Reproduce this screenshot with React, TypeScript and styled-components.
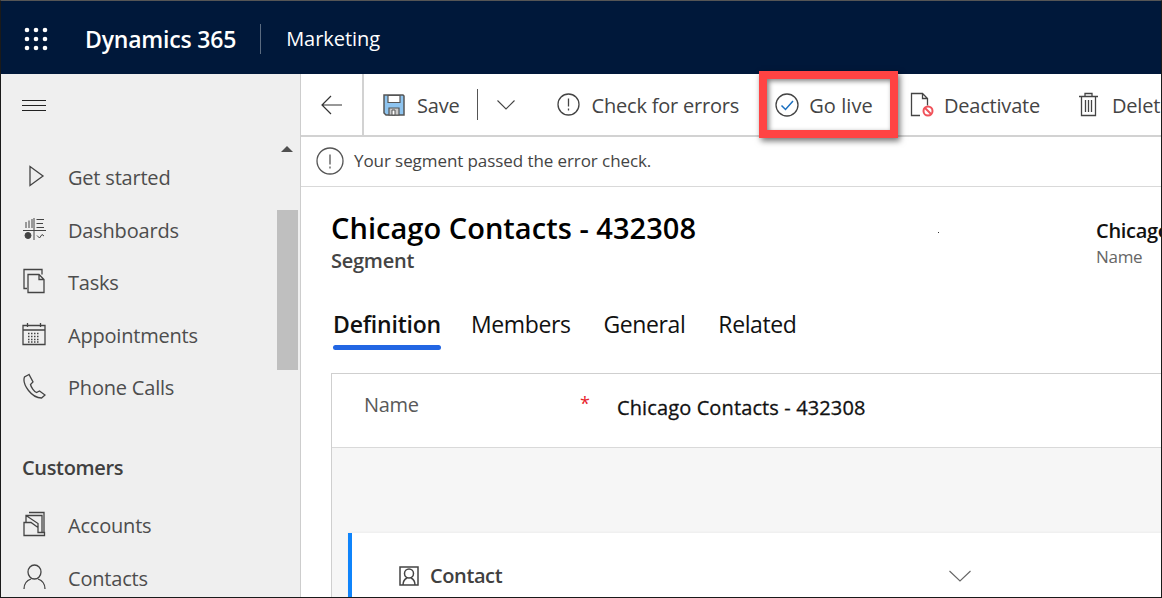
import styled, { createGlobalStyle } from 'styled-components';

const GlobalStyle = createGlobalStyle`
  html, body { margin: 0; padding: 0; background: #fff; }
  * { box-sizing: border-box; }
`;

const Frame = styled.div`
  width: 1162px;
  height: 598px;
  overflow: hidden;
  display: flex;
  flex-direction: column;
  border: 1px solid #1a1a1a;
  border-top-color: #555;
  font-family: 'Open Sans', 'Noto Sans', sans-serif;
  color: #333;
`;

const TopBar = styled.header`
  flex: 0 0 73px;
  display: flex;
  align-items: center;
  background: #00183a;
  color: #fff;
  padding: 2px 0 0 23px;
`;

const Waffle = styled.svg`
  width: 24px;
  height: 24px;
  margin-right: 37px;
`;

const Brand = styled.div`
  font-size: 23px;
  font-weight: 600;
  letter-spacing: -0.2px;
  padding-right: 24px;
  line-height: 30px;
`;

const Area = styled.div`
  font-size: 20px;
  letter-spacing: -0.05px;
  padding-left: 25px;
  border-left: 1px solid #5b6b80;
  line-height: 30px;
`;

const Body = styled.div`
  flex: 1;
  display: flex;
  min-height: 0;
`;

const Sidebar = styled.nav`
  position: relative;
  flex: 0 0 300px;
  background: #efefef;
  border-right: 1px solid #cdcdcd;
  overflow: hidden;
`;

const Hamburger = styled.div`
  height: 63px;
  display: flex;
  align-items: center;
  padding-left: 21px;
`;

const NavList = styled.ul<{ $top: number }>`
  list-style: none;
  margin: 0;
  padding: ${(p) => p.$top}px 0 0;
`;

const NavRow = styled.li`
  height: 52.5px;
  display: flex;
  align-items: center;
  font-size: 20px;
  letter-spacing: -0.2px;
  color: #4d4d4d;
`;

const NavIcon = styled.span`
  flex: 0 0 67px;
  display: flex;
  padding-left: 21px;
  margin-bottom: 3px;
`;

const NavGroup = styled.div`
  height: 55px;
  margin-top: 25.5px;
  display: flex;
  align-items: center;
  padding: 0 0 0 21px;
  font-size: 20px;
  font-weight: 600;
  letter-spacing: -0.35px;
  color: #404040;
`;

const ScrollArrow = styled.div`
  position: absolute;
  left: 280px;
  top: 72px;
  width: 0;
  height: 0;
  border-left: 6px solid transparent;
  border-right: 6px solid transparent;
  border-bottom: 6px solid #505050;
`;

const ScrollThumb = styled.div`
  position: absolute;
  left: 276px;
  top: 136px;
  width: 21px;
  height: 160px;
  background: #bfbfbf;
`;

const Main = styled.main`
  flex: 1;
  min-width: 0;
  display: flex;
  flex-direction: column;
  background: #fff;
`;

const CommandBar = styled.div`
  flex: 0 0 63px;
  display: flex;
  align-items: center;
  border-bottom: 2px solid #d2d2d2;
  white-space: nowrap;
  font-size: 20px;
  letter-spacing: -0.2px;
  color: #444;
`;

const BackButton = styled.div`
  flex: 0 0 63px;
  align-self: stretch;
  display: flex;
  align-items: center;
  justify-content: center;
  border-right: 2px solid #d2d2d2;
`;

const Command = styled.div<{ $left: number; $gap?: number }>`
  flex: none;
  position: relative;
  display: flex;
  align-items: center;
  gap: ${(p) => p.$gap ?? 12}px;
  margin-left: ${(p) => p.$left}px;
`;

const CommandLabel = styled.span<{ $tracking?: number }>`
  margin-top: 2px;
  letter-spacing: ${(p) => p.$tracking ?? -0.2}px;
`;

const Highlight = styled.div`
  position: absolute;
  left: -16px;
  right: -25px;
  top: -19px;
  bottom: -19px;
  border: 8px solid #ff4343;
  box-shadow: 2px 3px 6px rgba(0, 0, 0, 0.55), inset 2px 2px 5px rgba(0, 0, 0, 0.5);
  pointer-events: none;
`;

const SplitLine = styled.div`
  flex: none;
  width: 1px;
  height: 31px;
  background: #555;
  margin-left: 17px;
`;

const Notice = styled.div`
  flex: 0 0 50px;
  display: flex;
  align-items: center;
  gap: 10px;
  padding: 0 0 2px 15px;
  border-bottom: 1px solid #d9d9d9;
  font-size: 17px;
  letter-spacing: -0.08px;
  color: #444;
`;

const Content = styled.div`
  flex: 1;
  min-height: 0;
  padding: 0 0 0 30px;
  overflow: hidden;
`;

const RecordHead = styled.div`
  position: relative;
  display: flex;
  justify-content: space-between;
  height: 95px;
  padding-top: 22px;
`;

const RecordTitle = styled.h1`
  margin: 0;
  font-size: 29px;
  line-height: 38px;
  font-weight: 600;
  letter-spacing: 0.04px;
  color: #000;
`;

const RecordType = styled.div`
  font-size: 20px;
  line-height: 28px;
  font-weight: 600;
  letter-spacing: -0.25px;
  color: #444;
`;

const HeadField = styled.div`
  flex: 0 0 65px;
  overflow: hidden;
  padding-top: 8px;
`;

const HeadValue = styled.div`
  font-size: 20px;
  line-height: 28px;
  font-weight: 600;
  letter-spacing: -0.3px;
  color: #111;
`;

const HeadLabel = styled.div`
  font-size: 17px;
  line-height: 24px;
  letter-spacing: -0.3px;
  color: #666;
`;

const Speck = styled.span`
  position: absolute;
  left: 607px;
  top: 45px;
  width: 1px;
  height: 1px;
  background: #333;
`;

const Tabs = styled.div`
  display: flex;
  height: 91px;
  padding: 26px 0 0 2px;
  gap: 33px;
`;

const Tab = styled.div<{ $active?: boolean }>`
  position: relative;
  height: 33px;
  font-size: 23px;
  line-height: 33px;
  font-weight: ${(p) => (p.$active ? 600 : 400)};
  letter-spacing: ${(p) => (p.$active ? -0.2 : -0.4)}px;
  color: #111;
  margin-right: ${(p) => (p.$active ? -3 : 0)}px;

  &::after {
    content: '';
    display: ${(p) => (p.$active ? 'block' : 'none')};
    width: ${(p) => (p.$active ? '108px' : 0)};
    height: 5px;
    margin-top: 4px;
    border-radius: 3px;
    background: #2266e3;
  }
`;

const FormPanel = styled.section`
  border-top: 1px solid #cfcfcf;
  border-left: 1px solid #cfcfcf;
  height: 240px;
  display: flex;
  flex-direction: column;
`;

const NameRow = styled.div`
  flex: 0 0 74px;
  display: flex;
  border-bottom: 1px solid #d9d9d9;
`;

const FieldLabel = styled.div`
  flex: 0 0 248px;
  padding: 17px 0 0 32px;
  font-size: 20px;
  line-height: 28px;
  letter-spacing: -0.3px;
  color: #595959;
`;

const Required = styled.div`
  flex: 0 0 37px;
  padding-top: 15px;
  font-size: 18px;
  line-height: 28px;
  color: #e8232b;
`;

const FieldValue = styled.div`
  padding-top: 20px;
  font-size: 20px;
  line-height: 28px;
  letter-spacing: 0.12px;
  -webkit-text-stroke: 0.3px #111;
  color: #111;
`;

const GrayArea = styled.div`
  flex: 1;
  background: #f6f6f6;
  padding: 85px 0 0 16px;
`;

const Card = styled.div`
  height: 80px;
  background: #fff;
  border-left: 4px solid #0f84fb;
  box-shadow: 0 -1px 2px rgba(0, 0, 0, 0.04);
  display: flex;
  align-items: flex-start;
  padding: 29px 0 0 47px;
`;

const CardTitle = styled.div`
  display: flex;
  align-items: center;
  gap: 11px;
  width: 550px;
  font-size: 20px;
  line-height: 28px;
  font-weight: 600;
  letter-spacing: -0.4px;
  color: #404040;
`;

const CardChevron = styled.svg`
  width: 22px;
  height: 12px;
  margin-top: 8px;
`;

const line = { fill: 'none', stroke: '#444', strokeWidth: 1.3 };

const App = () => {
  return (
    <>
      <GlobalStyle />
      <Frame>
        <TopBar>
          <Waffle viewBox="0 0 24 24" fill="#fff">
            {[3, 12, 21].map((y) =>
              [3, 12, 21].map((x) => <circle key={`${x}-${y}`} cx={x} cy={y} r="2.3" />),
            )}
          </Waffle>
          <Brand>Dynamics 365</Brand>
          <Area>Marketing</Area>
        </TopBar>
        <Body>
          <Sidebar>
            <Hamburger>
              <svg width="24" height="12" viewBox="0 0 24 12" stroke="#222" strokeWidth="1">
                <path d="M0 0.5h24M0 5.5h24M0 10.5h24" />
              </svg>
            </Hamburger>
            <ScrollArrow />
            <ScrollThumb />
            <NavList $top={14.5}>
              <NavRow>
                <NavIcon>
                  <svg width="24" height="24" viewBox="0 0 24 24" {...line}>
                    <path d="M8 2.5v19L21 12z" />
                  </svg>
                </NavIcon>
                Get started
              </NavRow>
              <NavRow>
                <NavIcon>
                  <svg width="24" height="24" viewBox="0 0 24 24" {...line} strokeWidth="1">
                    <path d="M1 13.5h23M12 1v22M4 5v6M7 3.5V11M10 2v9M14.5 2.5H22M14.5 6.5H21M14.5 10.5H22M15 18.5l2.5 2.5 2.5-3.5 2 1.5" />
                    <circle cx="6" cy="18.5" r="3" fill="#444" />
                  </svg>
                </NavIcon>
                Dashboards
              </NavRow>
              <NavRow>
                <NavIcon>
                  <svg width="24" height="26" viewBox="0 0 24 26" {...line}>
                    <path d="M5 20.5H2V1.5h18v5M6 24.5V6.5h11l5 5v13zM17 6.5v5h5" />
                  </svg>
                </NavIcon>
                Tasks
              </NavRow>
              <NavRow>
                <NavIcon>
                  <svg width="24" height="24" viewBox="0 0 24 24" {...line}>
                    <path d="M1 3.5h22v19H1zM1 8h22M5.5 1v4M18.5 1v4" />
                    <path d="M6 11.5h12M6 14.5h12M6 17.5h12M6 20h12" strokeDasharray="1.5 1.5" />
                  </svg>
                </NavIcon>
                Appointments
              </NavRow>
              <NavRow>
                <NavIcon>
                  <svg width="24" height="26" viewBox="0 0 24 26" {...line}>
                    <path d="M7 1.5 2.5 4C1 8 3 13 6.5 17.5s9 7.5 13 7.5l3.500-3-5.500-4-3 1.500C12 18.500 9 14 8.500 11.500L11 9z" />
                  </svg>
                </NavIcon>
                Phone Calls
              </NavRow>
            </NavList>
            <NavGroup>Customers</NavGroup>
            <NavList $top={5}>
              <NavRow>
                <NavIcon>
                  <svg width="24" height="26" viewBox="0 0 24 26" {...line}>
                    <path d="M2 24.500V11.500h2l0-7h16v17h2.500v3zM7 1.500h15v20M4 4.500l12 8v9h6M2 11.500h7l7 5" />
                  </svg>
                </NavIcon>
                Accounts
              </NavRow>
              <NavRow>
                <NavIcon>
                  <svg width="24" height="26" viewBox="0 0 24 26" {...line}>
                    <ellipse cx="12.500" cy="8" rx="6.500" ry="7" />
                    <path d="M2 25c0-6 4-9 7-10M23 25c0-6-4-9-7-10" />
                  </svg>
                </NavIcon>
                Contacts
              </NavRow>
            </NavList>
          </Sidebar>
          <Main>
            <CommandBar>
              <BackButton>
                <svg width="22" height="20" viewBox="0 0 22 20" fill="none" stroke="#333" strokeWidth="1.200">
                  <path d="M21 10H1M10 1l-9 9 9 9" />
                </svg>
              </BackButton>
              <Command $left={19} $gap={12}>
                <svg width="22" height="22" viewBox="0 0 22 22">
                  <path d="M1 1h19l1 1v19H3l-2-2z" fill="#8ec4ef" stroke="#555" strokeWidth="1.500" />
                  <path d="M5 1.500h12v7H5z" fill="#fff" stroke="#555" strokeWidth="1.200" />
                  <path d="M6 21v-7h10v7z" fill="#c9c9c9" stroke="#555" strokeWidth="1.200" />
                  <path d="M9 16h3v5H9z" fill="#fff" stroke="#555" />
                </svg>
                <CommandLabel>Save</CommandLabel>
              </Command>
              <SplitLine />
              <Command $left={19}>
                <svg width="18" height="10" viewBox="0 0 18 10" fill="none" stroke="#444" strokeWidth="1.100">
                  <path d="M0.500 0.500 9 9l8.500-8.500" />
                </svg>
              </Command>
              <Command $left={42}>
                <svg width="23" height="23" viewBox="0 0 23 23" fill="none" stroke="#444" strokeWidth="1.300">
                  <circle cx="11.500" cy="11.500" r="10.500" />
                  <path d="M11.500 5.500v8M11.500 15.500v2" />
                </svg>
                <CommandLabel>Check for errors</CommandLabel>
              </Command>
              <Command $left={36} $gap={10}>
                <Highlight />
                <svg width="24" height="24" viewBox="0 0 24 24" fill="none" strokeWidth="1.300">
                  <circle cx="12" cy="12" r="11" stroke="#444" />
                  <path d="M6.500 12.500l4 4 7.500-8.500" stroke="#1a6fc0" strokeWidth="1.500" />
                </svg>
                <CommandLabel $tracking={0.1}>Go live</CommandLabel>
              </Command>
              <Command $left={37} $gap={10}>
                <svg width="24" height="25" viewBox="0 0 24 25" fill="none">
                  <path d="M10 23.500H1.500V1.500h11l5 5v7M12.500 1.500v5h5" stroke="#444" strokeWidth="1.300" />
                  <circle cx="18" cy="19" r="4.500" stroke="#f0525a" strokeWidth="2" />
                  <path d="M15 16l6 6" stroke="#f0525a" strokeWidth="2" />
                </svg>
                <CommandLabel>Deactivate</CommandLabel>
              </Command>
              <Command $left={39} $gap={14}>
                <svg width="19" height="25" viewBox="0 0 19 25" fill="none" stroke="#444" strokeWidth="1.300">
                  <path d="M0 4.500h19M6 4.500v-3h7v3M2.500 4.500v19h14v-19M6.500 8v12M9.500 8v12M12.500 8v12" />
                </svg>
                <CommandLabel>Delete</CommandLabel>
              </Command>
            </CommandBar>
            <Notice>
              <svg width="28" height="28" viewBox="0 0 28 28" fill="none" stroke="#555" strokeWidth="1.300">
                <circle cx="14" cy="14" r="13" />
                <path d="M14 7.500v10M14 19.500v2" />
              </svg>
              Your segment passed the error check.
            </Notice>
            <Content>
              <RecordHead>
                <div>
                  <RecordTitle>Chicago Contacts - 432308</RecordTitle>
                  <RecordType>Segment</RecordType>
                </div>
                <Speck />
                <HeadField>
                  <HeadValue>Chicago</HeadValue>
                  <HeadLabel>Name</HeadLabel>
                </HeadField>
              </RecordHead>
              <Tabs>
                <Tab $active>Definition</Tab>
                <Tab>Members</Tab>
                <Tab>General</Tab>
                <Tab>Related</Tab>
              </Tabs>
              <FormPanel>
                <NameRow>
                  <FieldLabel>Name</FieldLabel>
                  <Required>*</Required>
                  <FieldValue>Chicago Contacts - 432308</FieldValue>
                </NameRow>
                <GrayArea>
                  <Card>
                    <CardTitle>
                      <svg width="20" height="20" viewBox="0 0 20 20" fill="none" stroke="#444" strokeWidth="1.500">
                        <path d="M1 1h18v18H1z" />
                        <ellipse cx="10" cy="7.500" rx="4.500" ry="4.500" />
                        <path d="M4 19c0-4 2-6 4-7M16 19c0-4-2-6-4-7" />
                      </svg>
                      Contact
                    </CardTitle>
                    <CardChevron viewBox="0 0 22 12" fill="none" stroke="#666" strokeWidth="1.100">
                      <path d="M0.500 1 11 11 21.500 1" />
                    </CardChevron>
                  </Card>
                </GrayArea>
              </FormPanel>
            </Content>
          </Main>
        </Body>
      </Frame>
    </>
  );
};

export default App;
